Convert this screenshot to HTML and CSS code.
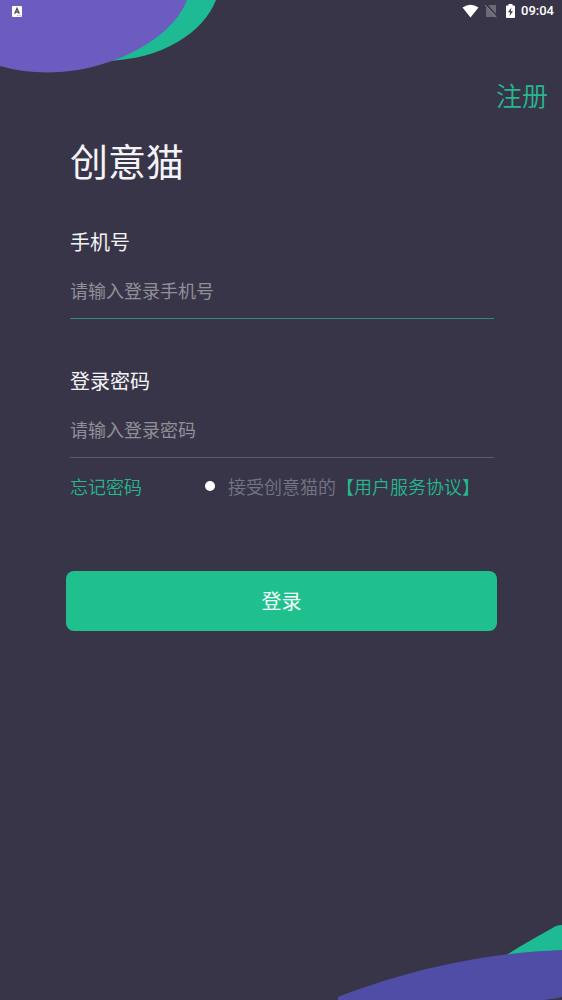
FILE: index.html
```html
<!DOCTYPE html>
<html lang="zh-CN">
<head>
<meta charset="utf-8">
<meta name="viewport" content="width=device-width, initial-scale=1">
<title>创意猫</title>
<link rel="stylesheet" href="styles.css">
</head>
<body class="screen">
  <svg class="blob blob-top" width="220" height="76" viewBox="0 0 220 76" aria-hidden="true">
    <path fill="#1dba93" d="M170 0H216C204 31 164 60 104 61Z"/>
    <path fill="#6c5cbf" d="M0 0H187C173 38 112 72 48 72.500Q22 72.500 0 66Z"/>
  </svg>
  <svg class="blob blob-bottom" width="226" height="76" viewBox="0 0 226 76" aria-hidden="true">
    <path fill="#1dba93" d="M166 34C184 22 202 12 220 2Q223 1 226 1V30L168 36Z"/>
    <path fill="#504da6" d="M2 73C60 50 140 29 226 26V73Q218 75 208 76H2Z"/>
  </svg>

  <header class="status">
    <svg class="status-app" width="10" height="11" viewBox="0 0 10 11" aria-hidden="true">
      <rect width="10" height="11" rx="1" fill="#fff"/>
      <path d="M2.700 7.800L5 2.500L7.300 7.800M3.500 6.200H6.500" fill="none" stroke="#4b4850" stroke-width="1.300"/>
      <path d="M5 9.700H9" stroke="#8f8c98" stroke-width=".8" stroke-dasharray="1.500 1"/>
    </svg>
    <div class="status-right">
      <svg width="17" height="14" viewBox="0 0 17 14" aria-hidden="true">
        <path fill="#fff" d="M.5 3.500Q8.500-2 16.500 3.500L8.500 13.500Z"/>
      </svg>
      <svg class="status-sim" width="12" height="14" viewBox="0 0 12 14" aria-hidden="true">
        <path fill="#6d6a78" d="M4 1H11V13H1V4Z"/>
        <path d="M1 0L12 12" stroke="#383548" stroke-width="1.500"/>
        <path d="M0 1L11.500 13.500" stroke="#858290" stroke-width="1"/>
      </svg>
      <svg class="status-battery" width="9" height="14" viewBox="0 0 9 14" aria-hidden="true">
        <path fill="#fff" d="M2.500 0H6.500V1.500H8Q9 1.500 9 2.500V13Q9 14 8 14H1Q0 14 0 13V2.500Q0 1.500 1 1.500H2.500Z"/>
        <path fill="#383548" d="M5.500 3.500L2 8.300H4.200L3.500 12L7 7.200H4.800Z"/>
      </svg>
      <time class="clock">09:04</time>
    </div>
  </header>

  <nav class="top-nav"><a class="register" href="#register">注册</a></nav>

  <main class="main">
    <h1 class="title">创意猫</h1>
    <form class="form">
      <div class="field">
        <label class="label" for="phone">手机号</label>
        <input class="input input-active" id="phone" type="tel" placeholder="请输入登录手机号">
      </div>
      <div class="field">
        <label class="label" for="password">登录密码</label>
        <input class="input" id="password" type="password" placeholder="请输入登录密码">
      </div>
      <div class="options">
        <a class="link" href="#forgot">忘记密码</a>
        <div class="agree">
          <input class="radio" id="agree" type="radio" name="agree">
          <label for="agree">接受创意猫的</label><a class="link" href="#terms">【用户服务协议】</a>
        </div>
      </div>
      <button class="submit" type="submit">登录</button>
    </form>
  </main>
</body>
</html>
```
FILE: styles.css
```css
* {
  box-sizing: border-box;
}

.screen {
  position: relative;
  min-height: 100vh;
  margin: 0;
  overflow-x: hidden;
  background: #383548;
  color: #f4f3f7;
  font-family: "Noto Sans CJK SC", sans-serif;
}

.blob {
  position: absolute;
  z-index: -1;
  display: block;
}

.blob-top {
  top: 0;
  left: 0;
}

.blob-bottom {
  right: 0;
  bottom: 0;
}

.status {
  display: flex;
  align-items: center;
  justify-content: space-between;
  height: 22px;
  padding: 0 8px 0 12px;
}

.status-right {
  display: flex;
  align-items: center;
}

.status-sim {
  margin-left: 6px;
}

.status-battery {
  margin-left: 9px;
}

.clock {
  margin-left: 6px;
  color: #fff;
  font: 500 13px/22px Roboto, sans-serif;
}

.top-nav {
  display: flex;
  justify-content: flex-end;
  padding: 53px 14px 0;
}

.register {
  color: #25b88d;
  font-size: 26px;
  line-height: 40px;
  font-weight: 350;
  text-decoration: none;
}

.main {
  padding: 17px 68px 0 70px;
}

.title {
  margin: 0;
  font-size: 38px;
  line-height: 56px;
  font-weight: 400;
}

.form {
  padding-top: 39px;
}

.field {
  display: flex;
  flex-direction: column;
  gap: 5px;
}

.field + .field {
  margin-top: 47px;
}

.label {
  font-size: 20px;
  line-height: 30px;
}

.input {
  width: 100%;
  height: 57px;
  padding: 0;
  border: 0;
  border-bottom: 1px solid #5d5a69;
  border-radius: 0;
  outline: 0;
  background: transparent;
  color: #f4f3f7;
  font: inherit;
  font-size: 18px;
}

.input-active {
  border-bottom-color: #2f8a7d;
}

.input::placeholder {
  color: #918f98;
  opacity: 1;
}

.options {
  display: flex;
  justify-content: space-between;
  padding-right: 14px;
  font-size: 18px;
  line-height: 28px;
  font-weight: 350;
  margin-top: 14px;
}

.link {
  color: #25b88d;
  text-decoration: none;
}

.agree {
  display: flex;
  align-items: center;
  color: #747587;
}

.radio {
  appearance: none;
  width: 10px;
  height: 10px;
  margin: 0 13px 0 0;
  border-radius: 50%;
  background: #fff;
}

.radio:checked {
  background: #20bf8e;
}

.submit {
  display: block;
  width: calc(100% + 7px);
  height: 60px;
  margin: 71px -3px 0 -4px;
  padding: 0 0 2px;
  border: 0;
  border-radius: 8px;
  background: #20bf8e;
  color: #f4fffb;
  font: inherit;
  font-size: 20px;
}
```
